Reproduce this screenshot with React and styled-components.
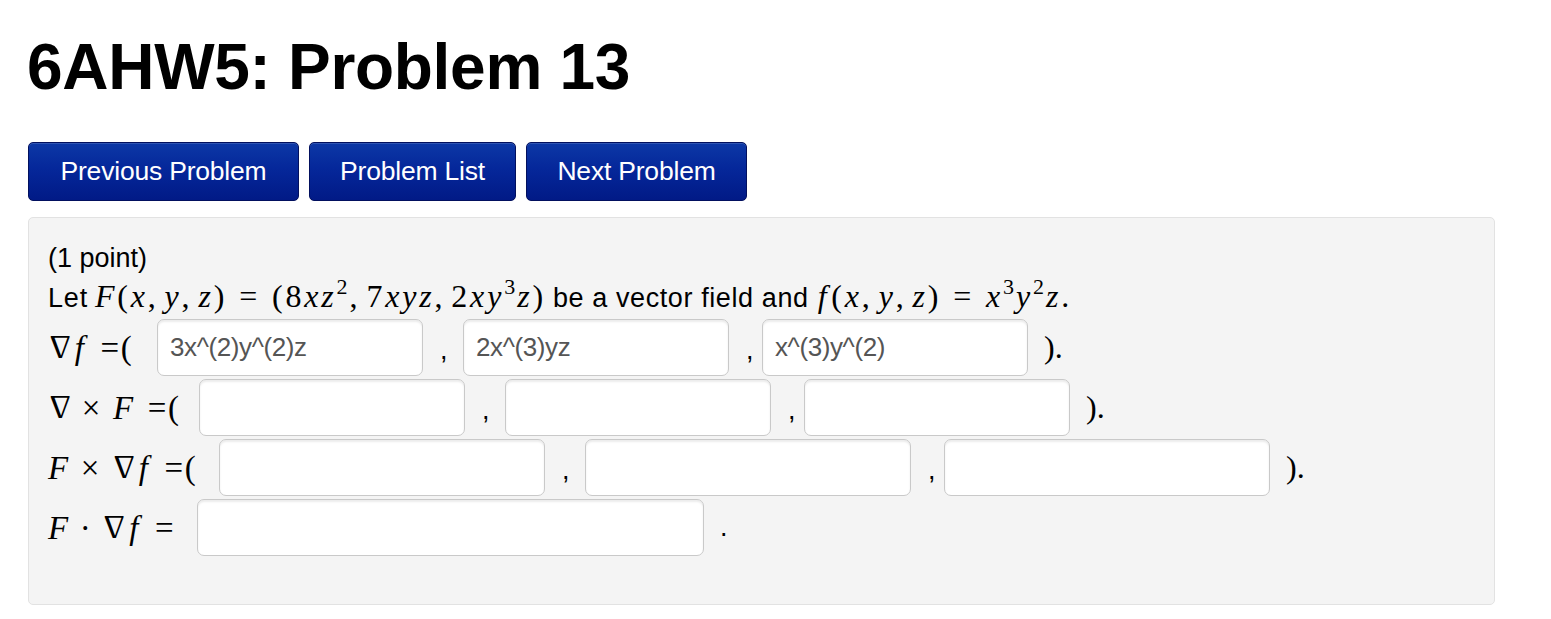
import React from "react";
import styled, { createGlobalStyle } from "styled-components";

const Global = createGlobalStyle`
  html, body { margin: 0; padding: 0; background: #ffffff; }
  body { font-family: "Liberation Sans", Arial, Helvetica, sans-serif; color: #000; }
`;

const Page = styled.div`
  padding: 0 56px 0 28px;
`;

const Title = styled.h1`
  margin: 32px 0 0 -1px;
  font-size: 64px;
  line-height: 70px;
  font-weight: 700;
  letter-spacing: -0.3px;
`;

const NavBar = styled.div`
  display: flex;
  gap: 10px;
  margin-top: 40px;
`;

const NavButton = styled.button`
  height: 59px;
  width: ${(p) => p.$w}px;
  padding: 0;
  border: 1px solid #02105e;
  border-radius: 5px;
  background: linear-gradient(to bottom, #0c38a6 0%, #05279a 45%, #011a86 100%);
  color: #ffffff;
  font-family: "Liberation Sans", Arial, sans-serif;
  font-size: 26.5px;
  letter-spacing: -0.2px;
  box-shadow: inset 0 1px 0 rgba(255,255,255,0.15);
  cursor: pointer;
`;

const Panel = styled.div`
  margin-top: 16px;
  background: #f4f4f4;
  border: 1px solid #e2e2e2;
  border-radius: 5px;
  padding: 21px 19px 47px 19px;
  font-size: 27px;
  line-height: 38px;
`;

const Line = styled.div`
  white-space: nowrap;
`;

const Prose = styled.span`
  letter-spacing: ${(p) => p.$ls || 0}px;
`;

const M = styled.span`
  font-family: "Liberation Serif", "Times New Roman", "DejaVu Serif", serif;
  font-size: 32px;
  letter-spacing: 2.8px;
  margin: 0 ${(p) => p.$m || 0}px;
`;

const V = styled.i`
  font-family: "Liberation Serif", "Times New Roman", serif;
  font-style: italic;
  margin-right: ${(p) => p.$r || 0}px;
`;

const Sup = styled.sup`
  font-size: 22px;
  line-height: 0;
  vertical-align: 0;
  position: relative;
  top: -13px;
  letter-spacing: 0;
  margin-right: 2px;
`;

const Op = styled.span`
  margin: 0 ${(p) => (p.$m === undefined ? 8 : p.$m)}px;
`;

const Rel = styled.span`
  margin-left: ${(p) => p.$l || 0}px;
`;

const Comma = styled.span`
  margin-right: 6px;
`;

const Row = styled.div`
  display: flex;
  align-items: center;
  height: 60px;
`;

const Label = styled.div`
  width: ${(p) => p.$w}px;
  flex: none;
  white-space: nowrap;
  font-family: "Liberation Serif", "Times New Roman", serif;
  font-size: 33px;
  letter-spacing: 1.6px;
  padding-top: 2px;
`;

const NablaGlyph = styled.span`
  display: inline-block;
  transform: rotate(180deg);
  font-family: "Liberation Serif", "Times New Roman", serif;
  font-style: normal;
  margin-right: ${(p) => p.$r || 0}px;
  position: relative;
  top: -1px;
`;

const Field = styled.input`
  box-sizing: border-box;
  flex: none;
  width: ${(p) => p.$w}px;
  height: 57px;
  margin: 0;
  padding: 0 12px;
  border: 1px solid #c9c9c9;
  border-radius: 7px;
  background: #ffffff;
  box-shadow: inset 0 2px 2px rgba(0, 0, 0, 0.08);
  font-family: "Liberation Sans", Arial, sans-serif;
  font-size: 26px;
  letter-spacing: -0.4px;
  color: #555555;
  outline: none;
`;

const Sep = styled.span`
  flex: none;
  width: ${(p) => p.$w}px;
  box-sizing: border-box;
  padding-left: 17px;
  padding-top: 6px;
  font-size: 27px;
`;

const Close = styled.span`
  padding-left: 16px;
  font-family: "Liberation Serif", "Times New Roman", serif;
  font-size: 32px;
`;

const Dot = styled.span`
  padding-left: 16px;
  font-size: 27px;
`;

const Nabla = ({ r }) => <NablaGlyph $r={r}>Δ</NablaGlyph>;

function Inputs({ w, values = [] }) {
  return (
    <>
      <Field $w={w} defaultValue={values[0] || ""} />
      <Sep $w={40}>,</Sep>
      <Field $w={w} defaultValue={values[1] || ""} />
      <Sep $w={33}>,</Sep>
      <Field $w={w} defaultValue={values[2] || ""} />
      <Close>).</Close>
    </>
  );
}

export default function App() {
  return (
    <Page>
      <Global />
      <Title>6AHW5: Problem 13</Title>
      <NavBar>
        <NavButton $w={271}>Previous Problem</NavButton>
        <NavButton $w={207}>Problem List</NavButton>
        <NavButton $w={221}>Next Problem</NavButton>
      </NavBar>
      <Panel>
        <Line>(1 point)</Line>
        <Line>
          <Prose $ls={0.8}>Let</Prose>
          <M $m={7}>
            <V>F</V>(<V>x</V>
            <Comma>,</Comma>
            <V>y</V>
            <Comma>,</Comma>
            <V>z</V>)<Op $m={12}>=</Op>(8<V>x</V>
            <V>z</V>
            <Sup>2</Sup>
            <Comma>,</Comma>7<V>x</V>
            <V>y</V>
            <V>z</V>
            <Comma>,</Comma>2<V>x</V>
            <V>y</V>
            <Sup>3</Sup>
            <V>z</V>)
          </M>
          <Prose $ls={0.6}>be a vector field and</Prose>
          <M $m={9}>
            <V $r={2}>f</V>(<V>x</V>
            <Comma>,</Comma>
            <V>y</V>
            <Comma>,</Comma>
            <V>z</V>)<Op $m={12}>=</Op>
            <V>x</V>
            <Sup>3</Sup>
            <V>y</V>
            <Sup>2</Sup>
            <V>z</V>.
          </M>
        </Line>
        <Row>
          <Label $w={109}>
            <Nabla r={4} />
            <V>f</V>
            <Rel $l={15}>=(</Rel>
          </Label>
          <Inputs w={266} values={["3x^(2)y^(2)z", "2x^(3)yz", "x^(3)y^(2)"]} />
        </Row>
        <Row>
          <Label $w={151}>
            <Nabla />
            <Op $m={11}>×</Op>
            <V>F</V>
            <Rel $l={13}>=(</Rel>
          </Label>
          <Inputs w={266} />
        </Row>
        <Row>
          <Label $w={171}>
            <V>F</V>
            <Op $m={11}>×</Op>
            <Nabla r={4} />
            <V>f</V>
            <Rel $l={15}>=(</Rel>
          </Label>
          <Inputs w={326} />
        </Row>
        <Row>
          <Label $w={149}>
            <V>F</V>
            <Op $m={10}>·</Op>
            <Nabla r={4} />
            <V>f</V>
            <Rel $l={15}>=</Rel>
          </Label>
          <Field $w={507} defaultValue="" />
          <Dot>.</Dot>
        </Row>
      </Panel>
    </Page>
  );
}
